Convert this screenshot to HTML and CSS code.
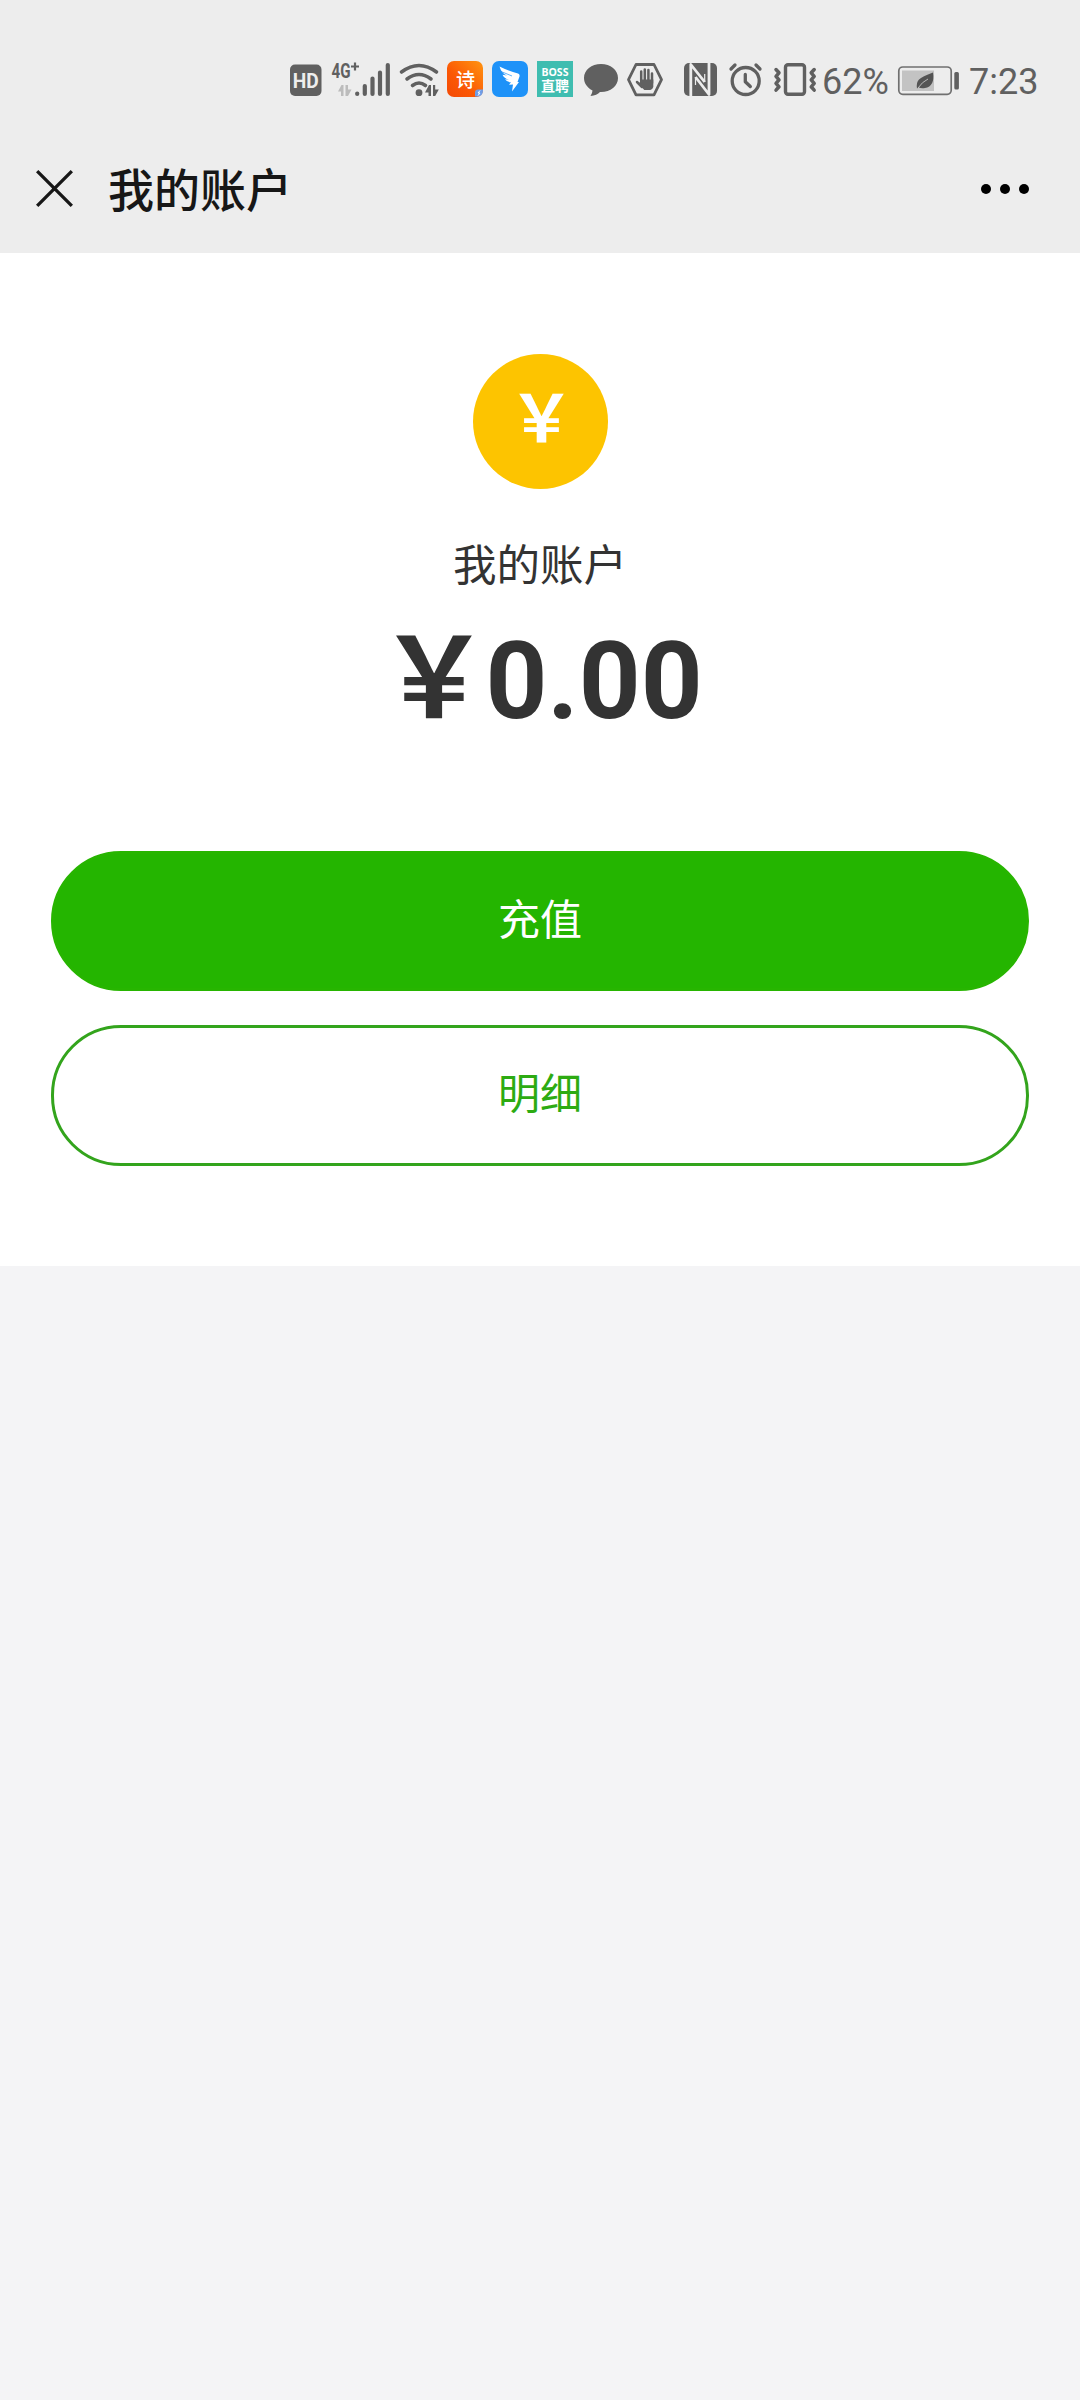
FILE: index.html
```html
<!DOCTYPE html>
<html lang="zh-CN">
<head>
<meta charset="utf-8">
<title>我的账户</title>
<link rel="stylesheet" href="styles.css">
</head>
<body>
<header class="top">
  <div class="status">
    <svg class="ic" width="32" height="36" viewBox="290 61 32 36"><rect x="290" y="64.500" width="31.500" height="31.500" rx="5" fill="#606060"/><text class="hd" x="305.700" y="87.500" text-anchor="middle" textLength="26" lengthAdjust="spacingAndGlyphs">HD</text></svg>
    <svg class="ic signal" width="60" height="36" viewBox="331 61 60 36"><text class="net" x="331.500" y="77.500" textLength="19" lengthAdjust="spacingAndGlyphs">4G</text><path d="M355 62.500v8M351 66.500h8" stroke="#606060" stroke-width="2.200"/><path d="M338 91.500l3.500-6.500h2v11h-2.500v-4.500zM345.500 85h2.500v4.500h3.500l-3.500 6.500h-2.500z" fill="#bcbcbc"/><path d="M357.200 94v-.5M364.800 94V86M372.500 94V78.500M380 94V72.500M387.800 94V65" fill="none" stroke="#606060" stroke-width="4.200" stroke-linecap="round"/></svg>
    <svg class="ic wifi" width="39" height="36" viewBox="400 61 39 36"><g fill="none" stroke="#606060" stroke-width="3.600" stroke-linecap="round"><path d="M401.500 72q17.500-13 35 0M407 79q12-9 24 0M412.500 85.500q6.500-5 13 0"/></g><circle cx="419" cy="92.700" r="3.400" fill="#606060"/><path d="M425 92.500l4-7.500h2v11h-2.500v-3.500zM433 85h2.200v4.500h3.600l-3.600 6.500h-2.200z" fill="#606060"/></svg>
    <svg class="ic" width="36" height="36" viewBox="447 61 36 36"><defs><linearGradient id="warm" x1="1" y1="0" x2="0" y2="1"><stop offset="0" stop-color="#ff9410"/><stop offset=".6" stop-color="#fb5805"/><stop offset="1" stop-color="#f44a06"/></linearGradient></defs><rect x="447" y="61" width="36" height="36" rx="7" fill="url(#warm)"/><text class="poem" x="465.500" y="86.500" text-anchor="middle">诗</text><path d="M475 96.500v-4q0-3 3-3h5v1q0 6-6 6z" fill="#6e9de8"/><path d="M480 90.500l-2 2.500h2l-2 2.500" fill="none" stroke="#fff"/></svg>
    <svg class="ic" width="36" height="36" viewBox="492 61 36 36"><rect x="492" y="61" width="36" height="36" rx="7" fill="#1e92f8"/><path d="M499.500 66.500q9 4.500 18.500 7q2 .5 1.500 3l-2 5.500h1.500l-7 9.500l1-7l-4 .300l2-2.500q-4 0-6-3l4 .4q-5-1.500-6.500-5l4.500.8q-5.500-2-7.500-9z" fill="#fff"/><path d="M501 71.500l11 4.500" stroke="#1e92f8" stroke-width=".7"/></svg>
    <svg class="ic" width="36" height="36" viewBox="537 61 36 36"><path d="M537 61h36v36h-36z" fill="#3fbdb0"/><text class="boss" x="555" y="75.500" text-anchor="middle" textLength="27" lengthAdjust="spacingAndGlyphs">BOSS</text><text class="hire" x="555" y="91" text-anchor="middle">直聘</text></svg>
    <svg class="ic chat" width="34" height="36" viewBox="584 61 34 36"><path d="M601 64c9.500 0 17 6 17 14s-7.500 14-17 14h-1q-3 3.500-9.500 4q1.800-2.300 2-5.500c-5-2.600-8.500-7-8.500-12.500c0-8 7.500-14 17-14z" fill="#606060"/></svg>
    <svg class="ic" width="36" height="36" viewBox="627 61 36 36"><path d="M636 64.500h18l7.500 15.200l-7.500 15.200h-18l-7.500-15.200z" fill="none" stroke="#606060" stroke-width="2.800" stroke-linejoin="round"/><g stroke="#606060" stroke-width="2.500" stroke-linecap="round"><path d="M641.200 81V71.500M644.800 80V69.500M648.400 81V70M652 83V73.500M637 82l5 5"/></g><path d="M640 79.500h13.300v7.500q-1 3-3 3h-6l-6.500-7q1-1.500 2.200 0z" fill="#606060"/></svg>
    <svg class="ic nfc" width="34" height="36" viewBox="684 61 34 36"><rect x="684" y="63" width="33" height="33" rx="5" fill="#606060"/><g fill="none" stroke="#ededed" stroke-linejoin="round"><path d="M690.800 97V64.500L704.700 82" stroke-width="2.800"/><path d="M709 62V94.500L695.500 77" stroke-width="2.800"/><path d="M704.700 82V74M695.500 77v8" stroke-width="1.200"/></g></svg>
    <svg class="ic" width="34" height="36" viewBox="729 61 34 36"><g fill="none" stroke="#606060" stroke-linecap="round" stroke-linejoin="round" stroke-width="3.300"><circle cx="745.700" cy="81" r="13.500"/><path d="M745.300 74.500v7.200l5 4.800M731 69l4-4M756 65l4 4"/></g></svg>
    <svg class="ic" width="42" height="36" viewBox="774 61 42 36"><g fill="none" stroke="#606060" stroke-width="3.400" stroke-linecap="round" stroke-linejoin="round"><rect x="785.500" y="64.700" width="19" height="29.600" rx="2.500"/><path d="M776 69.500l3 3.300l-3 3.500l3 3.500l-3 3.500l3 3.500l-3 3.300M814.200 69.500l-3 3.300l3 3.500l-3 3.500l3 3.500l-3 3.500l3 3.300" stroke-width="3.500"/></g></svg>
    <span class="pct">62%</span>
    <svg class="ic battery" width="62" height="36" viewBox="898 61 62 36"><rect x="898.800" y="67" width="52.400" height="27.300" rx="4" fill="none" stroke="#707070" stroke-width="1.700"/><path d="M902 70.500h32V91h-32z" fill="#c3c3c3"/><rect x="954.300" y="72" width="4.600" height="17.500" rx="1.500" fill="#606060"/><path d="M933 72.500q2 14-8 15.500q-4 .8-6.500-.8l-1.500 1.300q-1-6 2-9q3-3 14-7z" fill="#545454"/><path d="M918 88q4-6 10-9" fill="none" stroke="#c3c3c3" stroke-width=".9"/></svg>
    <span class="time">7:23</span>
  </div>
  <nav class="nav">
    <svg class="close" width="37" height="37" viewBox="0 0 38 38"><path d="M1.200 1.200l35.600 35.600M36.800 1.200L1.200 36.800" stroke="#171717" stroke-width="3.400"/></svg>
    <h1 class="title">我的账户</h1>
    <svg class="more" width="50" height="12" viewBox="0 0 50 12"><circle cx="6" cy="6" r="5"/><circle cx="25" cy="6" r="5"/><circle cx="44" cy="6" r="5"/></svg>
  </nav>
</header>
<main class="account">
  <div class="coin"><span>&#xFFE5;</span></div>
  <p class="label">我的账户</p>
  <p class="amount"><span class="yen">&#xFFE5;</span>0.00</p>
  <button class="btn primary">充值</button>
  <button class="btn outline">明细</button>
</main>
</body>
</html>
```

FILE: styles.css
```css
* { box-sizing: border-box; }
body {
  margin: 0;
  min-height: 2400px;
  background: #f4f4f6;
  color: #333;
  font-family: Roboto, "Noto Sans CJK SC", sans-serif;
}
h1, p { margin: 0; font-weight: 400; }
svg { display: block; flex: none; overflow: visible; }

.top { height: 253px; background: #ededed; }
.status {
  display: flex;
  align-items: center;
  height: 97px;
  padding: 61px 40px 0 290px;
  color: #606060;
  font-size: 36px;
  line-height: 36px;
  white-space: nowrap;
}
.ic { margin-right: 9px; }
.wifi { margin-right: 8px; }
.ic:nth-of-type(6) { margin-right: 11px; }
.ic:nth-of-type(8) { margin-right: 21px; }
.nfc { overflow: hidden; margin-right: 11px; }
.ic:nth-of-type(10) { margin-right: 11px; }
.ic:nth-of-type(11) { margin-right: 6px; }
.pct { width: 76px; padding-top: 5px; }
.battery { margin-right: 9px; }
.time { padding-top: 5px; }
.hd { font: 700 21px Roboto, sans-serif; fill: #ededed; }
.net { font: 700 20px Roboto, sans-serif; fill: #606060; }
.poem { font: 500 19px "Noto Sans CJK SC", sans-serif; fill: #fff; }
.boss { font: 700 11px "Noto Sans", sans-serif; fill: #fff; }
.hire { font: 700 14px "Noto Sans CJK SC", sans-serif; fill: #fff; }

.nav {
  display: flex;
  align-items: center;
  height: 156px;
  padding: 27px 50px 0 36px;
}
.title {
  margin-left: 35px;
  padding-top: 4px;
  color: #171717;
  font-size: 46px;
  font-weight: 500;
  line-height: 60px;
}
.more { margin-left: auto; }

.account {
  display: flex;
  flex-direction: column;
  align-items: center;
  height: 1013px;
  padding: 101px 51px 0;
  background: #fff;
}
.coin {
  display: flex;
  justify-content: center;
  width: 135px;
  height: 135px;
  padding-left: 3px;
  border-radius: 50%;
  background: #fdc400;
  color: #fff;
  font: 700 65px/121px "Noto Sans CJK SC", sans-serif;
}
.label { margin-top: 46px; font-size: 43.500px; line-height: 64px; }
.amount {
  height: 150px;
  margin-top: 7px;
  font-size: 108px;
  font-weight: 700;
  line-height: 150px;
  white-space: nowrap;
}
.yen {
  margin: 0 -4px 0 1px;
  font-family: "Noto Sans CJK SC", sans-serif;
  font-size: 111px;
  line-height: 1;
}
.btn {
  flex: none;
  width: 978px;
  height: 140px;
  padding: 0;
  border: 3px solid #27b500;
  border-radius: 70px;
  font: 400 42px/60px Roboto, "Noto Sans CJK SC", sans-serif;
}
.primary { margin-top: 95px; background: #24b500; color: #fff; }
.outline { margin-top: 34px; height: 141px; padding-bottom: 2px; border-color: #33a41c; background: #fff; color: #2dab12; }
```
